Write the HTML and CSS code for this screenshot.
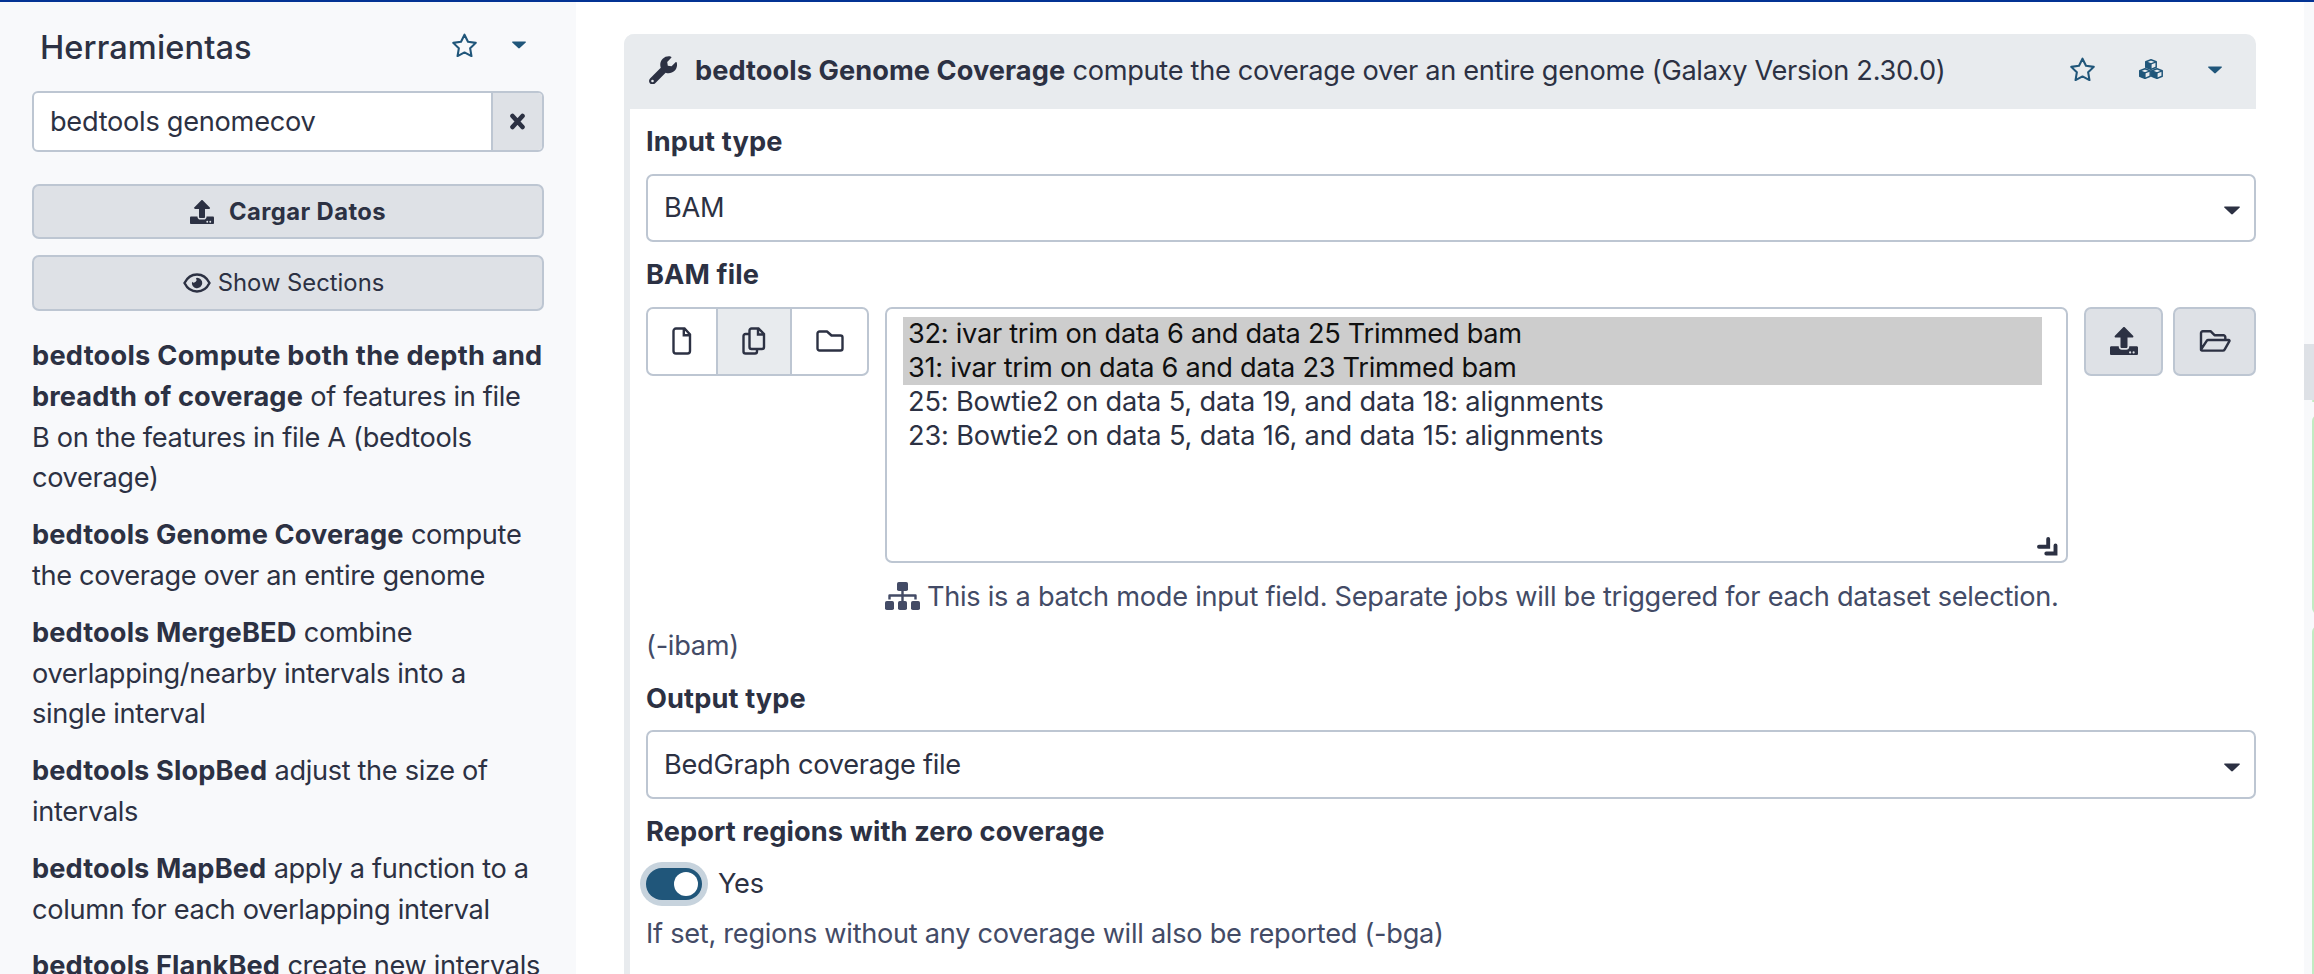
FILE: index.html
```html
<!DOCTYPE html>
<html lang="es">
<head>
<meta charset="utf-8">
<title>Galaxy</title>
<link rel="stylesheet" href="styles.css">
</head>
<body>
<svg class="defs" width="0" height="0">
  <symbol id="star" viewBox="12 4 552 508"><path d="M288 30l77 156 172 25-124 121 29 171-154-81-154 81 29-171L39 211l172-25z" fill="none" stroke="currentColor" stroke-width="46" stroke-linejoin="round"/></symbol>
  <symbol id="caret" viewBox="0 0 16 8"><path d="M.8 0h14.400c.8 0 1 .6.5 1.100L8.900 7.500c-.5.5-1.300.5-1.800 0L.3 1.100C-.2.6 0 0 .8 0z" fill="currentColor"/></symbol>
  <symbol id="upload" viewBox="0 0 512 512"><path fill="currentColor" fill-rule="evenodd" d="M296 384h-80c-13 0-24-11-24-24V192h-88c-18 0-27-21-14-34L242 6c8-8 20-8 28 0l152 152c13 13 4 34-14 34h-88v168c0 13-11 24-24 24zm216-8v112c0 13-11 24-24 24H24c-13 0-24-11-24-24V376c0-13 11-24 24-24h136v8c0 31 25 56 56 56h80c31 0 56-25 56-56v-8h136c13 0 24 11 24 24zm-124 88a20 20 0 1 0-40 0 20 20 0 1 0 40 0zm64 0a20 20 0 1 0-40 0 20 20 0 1 0 40 0z"/></symbol>
</svg>
<div class="app">
  <div class="masthead"></div>
  <div class="columns">
    <aside class="tools">
      <header class="tools-head">
        <h2>Herramientas</h2>
        <svg class="star"><use href="#star"/></svg>
        <svg class="caret-sm"><use href="#caret"/></svg>
      </header>
      <div class="search"><span class="query">bedtools genomecov</span><span class="clear"><svg width="17" height="17" viewBox="0 0 17 17"><path d="M3.500 3l10 11M13.500 3l-10 11" stroke="currentColor" stroke-width="4.600" stroke-linecap="round"/></svg></span></div>
      <div class="btn upload-btn"><svg width="24" height="24"><use href="#upload"/></svg><b>Cargar Datos</b></div>
      <div class="btn sections-btn"><svg width="28" height="20" viewBox="0 0 28 20"><path d="M1.500 10C4 5 8.500 1.500 14 1.500S24 5 26.500 10C24 15 19.500 18.500 14 18.500S4 15 1.500 10z" fill="none" stroke="currentColor" stroke-width="2.400"/><path d="M14 4.800a5.200 5.200 0 1 1-5 4 2.700 2.700 0 0 0 4-3.600z" fill="currentColor"/></svg><span>Show Sections</span></div>
      <ul class="tool-list">
        <li><b class="wide">bedtools Compute both the depth and</b><br><b>breadth of coverage</b> of features in file<br>B on the features in file A (bedtools<br>coverage)</li>
        <li><b>bedtools Genome Coverage</b> compute<br>the coverage over an entire genome</li>
        <li><b>bedtools MergeBED</b> combine<br>overlapping/nearby intervals into a<br>single interval</li>
        <li><b>bedtools SlopBed</b> adjust the size of<br>intervals</li>
        <li><b>bedtools MapBed</b> apply a function to a<br>column for each overlapping interval</li>
        <li><b>bedtools FlankBed</b> create new intervals</li>
      </ul>
    </aside>
    <main class="center">
      <section class="card">
        <header class="card-head">
          <svg class="wrench" viewBox="0 0 512 512"><path fill="currentColor" fill-rule="evenodd" d="M507 118c-2-10-14-12-21-5l-74 74-68-11-11-68 74-74c7-7 4-19-5-22C350-2 292 11 251 52c-44 44-56 107-36 163L19 411c-25 25-25 65 0 90s65 25 90 0l195-195c56 20 120 8 164-36 41-41 54-100 39-152zM64 480a24 24 0 1 1 0-48 24 24 0 0 1 0 48z"/></svg>
          <span class="card-title"><b>bedtools Genome Coverage</b> compute the coverage over an entire genome (Galaxy Version 2.30.0)</span>
          <svg class="star"><use href="#star"/></svg>
          <svg class="cubes" viewBox="0 0 24 20"><g id="cube"><path d="M12 .8l5.200 1.900v5.500L12 10.400 6.800 8.200V2.700z" fill="none" stroke="currentColor" stroke-width="1.500" stroke-linejoin="round"/><path d="M6.800 2.900L12 4.900l5.200-2" fill="none" stroke="currentColor" stroke-width="1.300"/><path d="M6.300 2.700l6.300 2.200v5.600L6.300 8.300z" fill="currentColor"/></g><use href="#cube" x="-6" y="9"/><use href="#cube" x="6" y="9"/></svg>
          <svg class="caret-sm"><use href="#caret"/></svg>
        </header>
        <div class="card-body">
          <label>Input type</label>
          <div class="select first"><span>BAM</span><svg class="caret"><use href="#caret"/></svg></div>
          <label>BAM file</label>
          <div class="data-row">
            <div class="modes">
              <span class="m1"><svg width="22" height="28" viewBox="0 0 22 28"><path d="M5 1.500h8.500L19 7.500V24a2.500 2.500 0 0 1-2.500 2.500H5A2.500 2.500 0 0 1 2.500 24V4A2.500 2.500 0 0 1 5 1.500zM12.800 2v6.200H19" fill="none" stroke="currentColor" stroke-width="2.400"/></svg></span>
              <span class="m2"><svg width="26" height="28" viewBox="0 0 26 28"><path d="M10.500 1.500h7L23 7v13a2 2 0 0 1-2 2H10.500a2 2 0 0 1-2-2V3.500a2 2 0 0 1 2-2zM17 2v5.500h5.500M8 7H4.500a2 2 0 0 0-2 2V24.500a2 2 0 0 0 2 2h9.500a2 2 0 0 0 2-2V22" fill="none" stroke="currentColor" stroke-width="2.400"/></svg></span>
              <span class="m3"><svg width="28" height="24" viewBox="0 0 28 24"><path d="M3.500 2.500H11l4.500 4h9a2 2 0 0 1 2 2v11a2 2 0 0 1-2 2h-21a2 2 0 0 1-2-2v-15a2 2 0 0 1 2-2z" fill="none" stroke="currentColor" stroke-width="2.400" stroke-linejoin="round"/></svg></span>
            </div>
            <div class="list-col">
              <div class="listbox">
                <div class="option on">32: ivar trim on data 6 and data 25 Trimmed bam</div>
                <div class="option on">31: ivar trim on data 6 and data 23 Trimmed bam</div>
                <div class="option rest">25: Bowtie2 on data 5, data 19, and data 18: alignments</div>
                <div class="option rest">23: Bowtie2 on data 5, data 16, and data 15: alignments</div>
                <svg class="grip" width="21" height="19" viewBox="0 0 21 19"><path d="M2 9.800h9.200V2M9.300 16.500h9.200V8.500" fill="none" stroke="currentColor" stroke-width="3.900" stroke-linecap="round"/></svg>
              </div>
              <div class="batch"><svg width="35" height="28" viewBox="0 0 35 28"><g fill="currentColor"><rect x="12" y="0" width="11" height="9" rx="1.800"/><rect x="0" y="19" width="9" height="9" rx="1.800"/><rect x="13" y="19" width="9" height="9" rx="1.800"/><rect x="26" y="19" width="9" height="9" rx="1.800"/></g><path d="M17.500 8v11M4.500 17.500v-4h26v4" fill="none" stroke="currentColor" stroke-width="2.400" stroke-linejoin="round"/></svg><span>This is a batch mode input field. Separate jobs will be triggered for each dataset selection.</span></div>
            </div>
            <div class="btn sq s1"><svg width="28" height="28"><use href="#upload"/></svg></div>
            <div class="btn sq s2"><svg width="32" height="24" viewBox="0 0 32 24"><path d="M2 20.500V4a1.800 1.800 0 0 1 1.800-1.800h7.700l4 4h9a1.800 1.800 0 0 1 1.800 1.800v3M2 20.500l5.700-8.700a1.800 1.800 0 0 1 1.500-.8h20.500a.8.8 0 0 1 .7 1.200l-4.800 8.400a2 2 0 0 1-1.700 1H3a1 1 0 0 1-1-1.100z" fill="none" stroke="currentColor" stroke-width="2.400" stroke-linejoin="round"/></svg></div>
          </div>
          <p class="help ibam">(-ibam)</p>
          <label>Output type</label>
          <div class="select second"><span>BedGraph coverage file</span><svg class="caret"><use href="#caret"/></svg></div>
          <label>Report regions with zero coverage</label>
          <div class="toggle-row"><span class="toggle"><i></i></span><span class="yes">Yes</span></div>
          <p class="help last">If set, regions without any coverage will also be reported (-bga)</p>
        </div>
      </section>
    </main>
    <aside class="history">
      <div class="handle"></div>
      <div class="item i1"></div>
      <div class="item i2"></div>
      <div class="item i3"></div>
    </aside>
  </div>
</div>
</body>
</html>
```
FILE: styles.css
```css
* { box-sizing: border-box; }
body { margin: 0; background: #fff; color: #2c3143; font: 27.2px/40.8px Inter, "Noto Sans", sans-serif; letter-spacing: -.28px; }
h2, p, ul { margin: 0; padding: 0; }
svg { display: block; flex: none; }
b, label { font-weight: 700; letter-spacing: .12px; }
.defs { position: absolute; }
.app { width: 2314px; height: 974px; overflow: hidden; display: flex; flex-direction: column; white-space: nowrap; }
.masthead { height: 2px; flex: none; background: #033394; }
.columns { display: flex; flex: 1; min-height: 0; }

.tools { width: 576px; flex: none; padding: 20px 32px 0; background: #f8f9fb; overflow: hidden; }
.tools-head { display: flex; align-items: center; height: 50px; padding-left: 8px; }
.tools-head h2 { font-size: 32.600px; font-weight: 500; flex: 1; letter-spacing: .1px; }
.star { width: 25px; height: 24px; color: #20567a; }
.caret-sm { width: 14px; height: 8px; color: #20567a; }
.tools-head .star { margin: 0 35px 4px 0; }
.tools-head .caret-sm { margin: 0 18px 5px 0; }
.search { display: flex; height: 61px; margin-top: 19px; border: 2px solid #bdc6d2; border-radius: 6px; background: #fff; overflow: hidden; }
.query { flex: 1; padding-left: 16px; line-height: 58px; }
.clear { width: 51px; border-left: 2px solid #bdc6d2; background: #dee1e6; display: flex; align-items: center; justify-content: center; }
.btn { display: flex; align-items: center; justify-content: center; border: 2px solid #bdc6d2; border-radius: 7px; background: #dee1e6; font-size: 23.800px; letter-spacing: 0; }
.upload-btn { height: 55px; margin-top: 32px; gap: 15px; }
.upload-btn b { letter-spacing: .42px; padding-top: 1px; }
.sections-btn { height: 56px; margin-top: 16px; gap: 7px; padding-right: 9px; }
.tool-list { list-style: none; margin-top: 25px; display: flex; flex-direction: column; gap: 16px; letter-spacing: -.34px; }
.wide { letter-spacing: .26px; }

.center { flex: 1; padding: 32px 48px 0; }
.card { height: 1000px; border-left: 6px solid #e8ebee; border-radius: 10px 10px 0 0; }
.card-head { display: flex; align-items: center; height: 75px; margin-left: -6px; padding-left: 25px; background: #e8ebee; border-radius: 10px 10px 0 0; }
.wrench { width: 28px; height: 28px; margin: 0 18px 3px 0; }
.card-title { flex: 1; letter-spacing: -.31px; }
.card-title b { letter-spacing: .06px; }
.card-head .star { margin: 0 44px 5px 0; }
.cubes { width: 24px; height: 20px; margin: 0 45px 5px 0; color: #20567a; }
.card-head .caret-sm { margin: 0 34px 3px 0; }
.card-body { padding: 13px 0 0 16px; }
label { display: block; }
.select { display: flex; align-items: center; justify-content: space-between; border: 2px solid #bdc6d2; border-radius: 7px; padding: 1px 14px 0 16px; }
.caret { width: 16px; height: 9px; margin-top: 5px; }
.first { height: 68px; margin: 11px 0 13px; }
.data-row { display: flex; margin-top: 11px; align-items: flex-start; }
.modes { display: flex; width: 223px; height: 69px; border: 2px solid #bdc6d2; border-radius: 7px; margin-right: 16px; overflow: hidden; }
.modes span { display: flex; align-items: center; justify-content: center; }
.m1 { width: 68px; }
.m2 { width: 76px; background: #e8ebee; border: solid #bdc6d2; border-width: 0 2px; }
.m3 { flex: 1; }
.list-col { width: 1183px; margin-right: 16px; }
.listbox { position: relative; height: 256px; border: 2px solid #bdc6d2; border-radius: 7px; padding: 8px 24px 0 16px; }
.option { height: 34px; line-height: 34px; padding-left: 5px; }
.on { background: #cdcdcd; color: #101010; }
.rest { letter-spacing: -.16px; }
.grip { position: absolute; right: 8px; bottom: 5px; }
.batch { display: flex; align-items: center; gap: 7px; margin-top: 14px; color: #434b66; }
.batch svg { margin-bottom: 2px; }
.sq { height: 69px; }
.s1 { width: 79px; margin-right: 10px; }
.s2 { width: 83px; }
.help { color: #434b66; }
.ibam { margin-top: 9px; margin-bottom: 12px; }
.second { height: 69px; margin: 10px 0 13px; }
.toggle-row { display: flex; align-items: center; gap: 16px; height: 41px; margin-top: 11px; }
.yes { padding-top: 1px; }
.toggle { width: 56px; height: 32px; padding: 4px; border-radius: 16px; background: #20567a; box-shadow: 0 0 0 6px #c7d3dd; display: flex; justify-content: flex-end; }
.toggle i { width: 24px; height: 24px; border-radius: 50%; background: #fff; }
.last { margin-top: 9px; }

.history { width: 10px; background: #f8f9fb; overflow: hidden; display: flex; flex-direction: column; }
.handle { height: 56px; margin-top: 342px; background: #dee1e6; flex: none; }
.item { margin-left: 8px; width: 20px; background: #c2ebc2; border-radius: 6px; flex: none; }
.i1 { height: 2px; }
.i2 { height: 199px; margin-top: 13px; }
.i3 { height: 400px; margin-top: 12px; }
```
